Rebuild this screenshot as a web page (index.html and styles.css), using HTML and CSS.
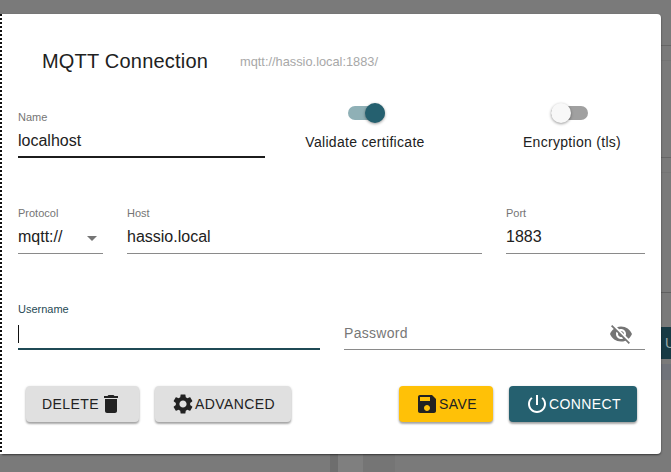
FILE: index.html
```html
<!DOCTYPE html>
<html lang="en">
<head>
<meta charset="utf-8">
<title>MQTT Connection</title>
<link rel="stylesheet" href="styles.css">
</head>
<body>
<div class="backdrop">
  <i class="bg-line l1"></i><i class="bg-line l2"></i><i class="bg-line l3"></i><i class="bg-line l4"></i><i class="bg-line l5"></i>
  <i class="bg-button"><span>UE</span></i>
  <i class="bg-band"></i>
  <i class="bg-col c1"></i><i class="bg-col c2"></i><i class="bg-col c3"></i>
</div>
<main class="dialog">
  <header class="title-row">
    <h1 class="title">MQTT Connection</h1>
    <span class="url">mqtt://hassio.local:1883/</span>
  </header>
  <section class="row row-name">
    <div class="field name-field">
      <label class="label">Name</label>
      <div class="value">localhost</div>
      <div class="underline strong"></div>
    </div>
    <div class="switch-col validate">
      <div class="switch on"><span class="track"></span><span class="thumb"></span></div>
      <div class="switch-label">Validate certificate</div>
    </div>
    <div class="switch-col encrypt">
      <div class="switch off"><span class="track"></span><span class="thumb"></span></div>
      <div class="switch-label">Encryption (tls)</div>
    </div>
  </section>
  <section class="row row-host">
    <div class="field protocol">
      <label class="label">Protocol</label>
      <div class="value select">mqtt://<svg class="caret" viewBox="0 0 10 5" width="10" height="5"><path d="M0 0h10L5 5z"/></svg></div>
      <div class="underline"></div>
    </div>
    <div class="field host">
      <label class="label">Host</label>
      <div class="value">hassio.local</div>
      <div class="underline"></div>
    </div>
    <div class="field port">
      <label class="label">Port</label>
      <div class="value">1883</div>
      <div class="underline"></div>
    </div>
  </section>
  <section class="row row-auth">
    <div class="field username">
      <label class="label focus">Username</label>
      <div class="value"><span class="cursor"></span></div>
      <div class="underline focus-line"></div>
    </div>
    <div class="field password">
      <div class="value placeholder">Password
        <svg class="eye" viewBox="0 0 24 24" width="24" height="24"><path d="M12 7c2.76 0 5 2.24 5 5 0 .65-.13 1.26-.36 1.83l2.92 2.92c1.51-1.26 2.7-2.89 3.43-4.75-1.73-4.39-6-7.5-11-7.5-1.4 0-2.74.25-3.98.7l2.16 2.16C10.74 7.13 11.35 7 12 7zM2 4.27l2.28 2.28.46.46C3.08 8.3 1.78 10.02 1 12c1.73 4.39 6 7.5 11 7.5 1.55 0 3.03-.3 4.38-.84l.42.42L19.73 22 21 20.73 3.27 3 2 4.27zM7.53 9.8l1.55 1.55c-.05.21-.08.43-.08.65 0 1.66 1.34 3 3 3 .22 0 .44-.03.65-.08l1.55 1.55c-.67.33-1.41.53-2.2.53-2.76 0-5-2.24-5-5 0-.79.2-1.53.53-2.2zm4.31-.78l3.15 3.15.02-.16c0-1.66-1.34-3-3-3l-.17.01z"/></svg>
      </div>
      <div class="underline"></div>
    </div>
  </section>
  <footer class="actions">
    <button class="btn grey delete">DELETE<svg viewBox="0 0 24 24" width="24" height="24"><path d="M6 19c0 1.1.9 2 2 2h8c1.1 0 2-.9 2-2V7H6v12zM19 4h-3.5l-1-1h-5l-1 1H5v2h14V4z"/></svg></button>
    <button class="btn grey advanced"><svg viewBox="0 0 24 24" width="24" height="24"><path d="M19.14 12.94c.04-.3.06-.61.06-.94 0-.32-.02-.64-.07-.94l2.03-1.58c.18-.14.23-.41.12-.61l-1.92-3.32c-.12-.22-.37-.29-.59-.22l-2.39.96c-.5-.38-1.03-.7-1.62-.94l-.36-2.54c-.04-.24-.24-.41-.48-.41h-3.84c-.24 0-.43.17-.47.41l-.36 2.54c-.59.24-1.13.57-1.62.94l-2.39-.96c-.22-.08-.47 0-.59.22L2.74 8.87c-.12.21-.08.47.12.61l2.03 1.58c-.05.3-.09.63-.09.94s.02.64.07.94l-2.03 1.58c-.18.14-.23.41-.12.61l1.92 3.32c.12.22.37.29.59.22l2.39-.96c.5.38 1.03.7 1.62.94l.36 2.54c.05.24.24.41.48.41h3.84c.24 0 .44-.17.47-.41l.36-2.54c.59-.24 1.13-.56 1.62-.94l2.39.96c.22.08.47 0 .59-.22l1.92-3.32c.12-.22.07-.47-.12-.61l-2.01-1.58zM12 15.6c-1.98 0-3.6-1.62-3.6-3.6s1.62-3.6 3.6-3.6 3.6 1.62 3.6 3.6-1.62 3.6-3.6 3.6z"/></svg>ADVANCED</button>
    <span class="spacer"></span>
    <button class="btn amber save"><svg viewBox="0 0 24 24" width="24" height="24"><path d="M17 3H5c-1.11 0-2 .9-2 2v14c0 1.1.89 2 2 2h14c1.1 0 2-.9 2-2V7l-4-4zm-5 16c-1.66 0-3-1.34-3-3s1.34-3 3-3 3 1.34 3 3-1.34 3-3 3zm3-10H5V5h10v4z"/></svg>SAVE</button>
    <button class="btn teal connect"><svg viewBox="0 0 24 24" width="24" height="24"><path d="M13 3h-2v10h2V3zm4.83 2.17l-1.42 1.42C17.99 7.86 19 9.81 19 12c0 3.87-3.13 7-7 7s-7-3.13-7-7c0-2.19 1.01-4.14 2.58-5.42L6.17 5.17C4.23 6.82 3 9.26 3 12c0 4.97 4.03 9 9 9s9-4.03 9-9c0-2.74-1.23-5.18-3.17-6.83z"/></svg>CONNECT</button>
  </footer>
</main>
</body>
</html>
```
FILE: styles.css
```css
* { box-sizing: border-box; }
html, body { margin: 0; height: 100%; }
body {
  width: 671px; height: 472px; overflow: hidden; position: relative;
  background: #7a7a7a;
  font-family: "Liberation Sans", Arial, sans-serif;
  color: #212121;
}
.backdrop { position: absolute; inset: 0; }
.bg-line { position: absolute; left: 661px; width: 10px; height: 1px; background: #666; }
.l1 { top: 45px; } .l3 { top: 157px; } .l5 { top: 292px; background: #606060; }
.l2 { top: 60px; background: #747474; } .l4 { top: 172px; background: #747474; }
.bg-button { position: absolute; left: 661px; top: 327px; width: 10px; height: 32px; overflow: hidden; padding-left: 4px; background: #173a44; color: #9aa; font: normal 14px/32px "Liberation Sans", sans-serif; white-space: nowrap; }
.bg-band { position: absolute; left: 661px; top: 364px; width: 10px; height: 16px; background: #70737a; }
.bg-col { position: absolute; top: 454px; height: 18px; }
.c1 { left: 330px; width: 8px; background: #6e6e6e; }
.c2 { left: 338px; width: 25px; background: #7f7f7f; }
.c3 { left: 363px; width: 32px; background: #757575; }
.dialog {
  position: absolute; left: 2px; top: 14px; width: 659px; height: 440px;
  background: #fff; border-radius: 0 4px 4px 0;
  padding: 0 16px;
  box-shadow: 0 1px 2px rgba(0,0,0,.55);
  display: flex; flex-direction: column;
}
body::before {
  content: ""; position: absolute; z-index: 2; left: 0; top: 14px; width: 2px; height: 440px;
  background: repeating-linear-gradient(#111 0 2px, #fff 2px 4px);
}
.title-row { display: flex; align-items: center; flex: none; height: 97px; padding: 0 0 5px 24px; }
.title { margin: 0; font-size: 20px; font-weight: 400; line-height: 24px; letter-spacing: .2px; position: relative; top: 1px; }
.url { margin-left: 32px; font-size: 12.8px; color: #a8a8a8; position: relative; top: 1px; }
.row { display: flex; flex: none; }
.field { display: flex; flex-direction: column; flex: none; }
.label { font-size: 11px; line-height: 13px; color: #757575; height: 18px; }
.label.focus { color: #1f4a55; }
.value { font-size: 16px; line-height: 24px; height: 27px; color: #212121; position: relative; }
.underline { height: 1px; background: #8a8a8a; }
.underline.strong { height: 2px; background: #1c1c1c; }
.underline.focus-line { height: 2px; background: #1f4a55; }
.row-name { height: 96px; }
.name-field { width: 247px; }
.switch-col { display: flex; flex-direction: column; align-items: center; flex: none; font-size: 14px; width: 150px; margin-top: -8px; }
.validate { margin-left: 25px; }
.encrypt { margin-left: 57px; }
.switch { position: relative; width: 37px; height: 20px; }
.validate .switch { margin-left: 3px; }
.encrypt .switch { margin-right: 5px; }
.track { position: absolute; left: 0; top: 3px; width: 37px; height: 14px; border-radius: 7px; }
.thumb { position: absolute; top: 0; width: 20px; height: 20px; border-radius: 50%; box-shadow: 0 1px 3px rgba(0,0,0,.4); }
.on .track { background: #8fb0b6; }
.on .thumb { left: 17px; background: #25606f; }
.off .track { background: #a0a0a0; }
.off .thumb { left: 0; background: #f8f8f8; }
.switch-label { margin-top: 10px; line-height: 18px; letter-spacing: .3px; white-space: nowrap; }
.row-host { height: 96px; gap: 24px; }
.row-host .value { height: 28px; }
.protocol { width: 85px; } .host { width: 355px; } .port { width: 139px; }
.select { display: flex; justify-content: space-between; align-items: flex-start; padding-right: 6px; }
.caret { fill: #757575; margin-top: 11px; }
.row-auth { height: 83px; gap: 24px; }
.username { width: 302px; }
.password { width: 301px; padding-top: 18px; }
.cursor { display: block; width: 1px; height: 18px; background: #111; margin-top: 4px; }
.placeholder { color: #777; font-size: 14px; letter-spacing: .3px; height: 28px; }
.eye { position: absolute; right: 12px; top: 1px; fill: #757575; }
.actions { display: flex; align-items: center; flex: none; padding: 0 8px; gap: 16px; }
.spacer { flex: 1; margin-left: -16px; }
.btn {
  height: 36px; border: 0; border-radius: 4px; padding: 0 16px;
  display: flex; align-items: center; justify-content: center;
  font: 14px/36px "Liberation Sans", Arial, sans-serif; letter-spacing: .4px;
  box-shadow: 0 2px 2px rgba(0,0,0,.25), 0 1px 3px rgba(0,0,0,.2);
}
.btn svg { fill: currentColor; flex: none; }
.grey { background: #e0e0e0; color: #222; }
.amber { background: #ffc107; color: #222; }
.teal { background: #25606f; color: #fff; }
.delete { width: 113px; } .advanced { width: 136px; }
.save { width: 94px; } .connect { width: 128px; }
```
